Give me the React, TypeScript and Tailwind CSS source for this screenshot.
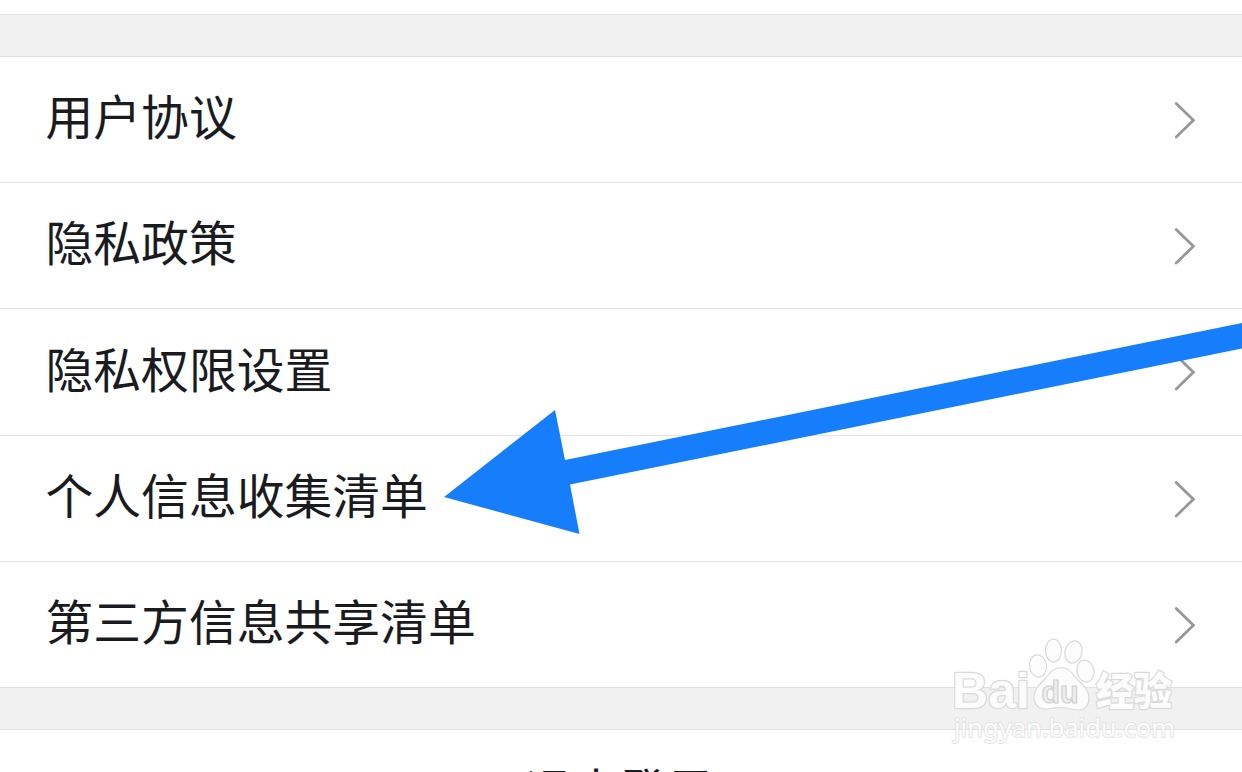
const items = [
  { label: "用户协议", height: "h-[126px] border-b" },
  { label: "隐私政策", height: "h-[126px] border-b" },
  { label: "隐私权限设置", height: "h-[127px] border-b" },
  { label: "个人信息收集清单", height: "h-[126px] border-b" },
  { label: "第三方信息共享清单", height: "h-[125px]" },
];

function Chevron() {
  return (
    <svg
      className="h-[40px] w-[26px] shrink-0"
      viewBox="0 0 26 40"
      fill="none"
      stroke="#97989c"
      strokeWidth="2.8"
    >
      <path d="M4.2 3.4 L21.4 20.2 L4.2 37" strokeLinecap="round" />
    </svg>
  );
}

function Row({ label, height }: { label: string; height: string }) {
  return (
    <li
      className={`flex items-center justify-between border-[#e4e4e5] pr-[44px] pl-[45.5px] ${height}`}
    >
      <span className="pb-[9px] text-[47.8px] leading-none whitespace-nowrap">{label}</span>
      <Chevron />
    </li>
  );
}

// Blue pointer laid over the list
function Arrow() {
  return (
    <svg
      className="pointer-events-none absolute top-0 left-0 h-[772px] w-[1242px]"
      viewBox="0 0 1242 772"
    >
      <path
        d="M444 497 L555 410 L565 460 L1242 323 L1242 348.5 L570 484.5 L579.5 534 Z"
        fill="#167efb"
      />
    </svg>
  );
}

function Watermark() {
  return (
    <svg
      className="pointer-events-none absolute top-[630px] left-[940px] h-[130px] w-[250px]"
      viewBox="0 0 250 130"
      fill="#fcfcfc"
      stroke="#d9d9d9"
      strokeWidth="1.2"
    >
      <g paintOrder="stroke" strokeLinejoin="round">
        <text
          x="12"
          y="78"
          fontSize="50"
          fontWeight="700"
          strokeWidth="2.4"
          fontFamily="'Liberation Sans', sans-serif"
          textLength="78"
          lengthAdjust="spacingAndGlyphs"
        >
          Bai
        </text>
        <text
          x="156"
          y="75"
          fontSize="39"
          fontWeight="900"
          strokeWidth="2.4"
          fontFamily="'Noto Sans CJK SC', sans-serif"
          textLength="76"
          lengthAdjust="spacingAndGlyphs"
        >
          经验
        </text>
        <text
          x="14"
          y="107"
          fontSize="25.5"
          strokeWidth="1.6"
          stroke="#e0e0e0"
          fontFamily="'Noto Sans', sans-serif"
          textLength="221"
          lengthAdjust="spacingAndGlyphs"
        >
          jingyan.baidu.com
        </text>
      </g>
      <ellipse cx="98" cy="36" rx="8.5" ry="11.2" transform="rotate(-8 98 36)" />
      <ellipse cx="113.5" cy="20.5" rx="8" ry="11.5" />
      <ellipse cx="133.5" cy="22" rx="8.5" ry="11.2" transform="rotate(14 133.5 22)" />
      <ellipse cx="145.5" cy="41" rx="8.5" ry="11" transform="rotate(-12 145.5 41)" />
      <path d="M121 37.5 C113 37.5 109 44 105 49 C100 54 94 59 94 67 C94 75 99 79.5 106 79 C112 78.5 116 77.5 121 77.5 C127 77.5 132 80 138 80 C145 80 149 75 149 68 C149 60 143 55 138 50 C133 45 130 37.5 121 37.5 Z" />
      <text
        x="101.5"
        y="72.5"
        fontFamily="'Liberation Sans', sans-serif"
        fontSize="32"
        fontWeight="700"
        fill="#eeeeee"
        stroke="#cfcfcf"
        textLength="37"
        lengthAdjust="spacingAndGlyphs"
      >
        du
      </text>
    </svg>
  );
}

export default function App() {
  return (
    <main className="relative h-[772px] w-[1242px] overflow-hidden bg-white font-['Noto_Sans_CJK_SC',sans-serif] text-[#1a1b1f]">
      <div className="h-[14px]" />
      <div className="h-[43px] border-y border-[#e0e0e1] bg-[#f1f1f1]" />
      <ul>
        {items.map((item) => (
          <Row key={item.label} {...item} />
        ))}
      </ul>
      <div className="h-[43px] border-y border-[#e0e0e1] bg-[#f1f1f1]" />
      <button className="flex h-[126px] w-full items-center justify-center pr-[2px] pb-[9px] text-[47.8px] leading-none">
        退出登录
      </button>
      <Arrow />
      <Watermark />
    </main>
  );
}
